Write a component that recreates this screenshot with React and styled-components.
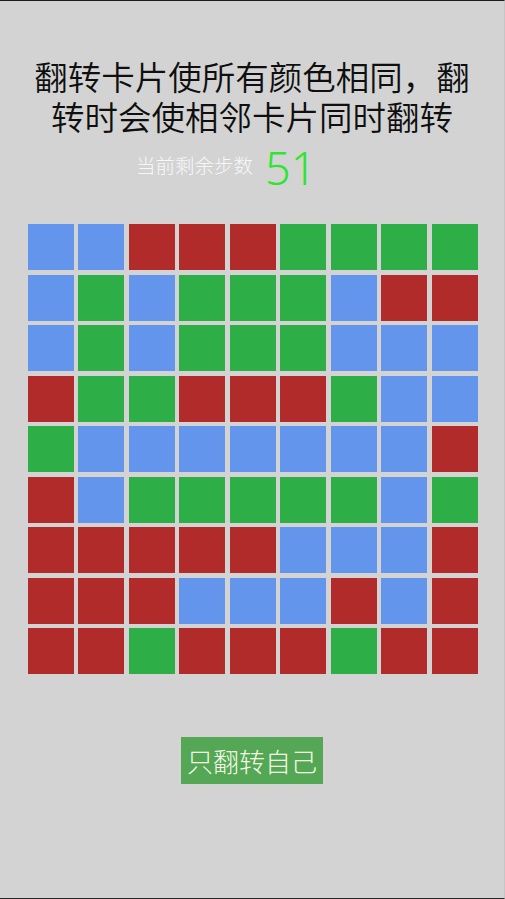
import React from "react";
import styled, { createGlobalStyle } from "styled-components";

const GlobalStyle = createGlobalStyle`
  html, body {
    margin: 0;
    padding: 0;
    background: #d3d3d3;
  }
  * { box-sizing: border-box; }
`;

const Page = styled.div`
  min-height: 100vh;
  background: #d3d3d3;
  border-top: 1px solid #1c1c1c;
  border-bottom: 1px solid #262626;
  border-right: 1px solid #c6c6c6;
  display: flex;
  flex-direction: column;
  align-items: center;
  font-family: "Noto Sans CJK SC", "Noto Sans", sans-serif;
`;

const Title = styled.h1`
  margin: 55px 0 0;
  width: 450px;
  font-size: 33.5px;
  line-height: 40px;
  font-weight: 350;
  color: #0f0f0f;
  text-align: center;
`;

const CounterRow = styled.div`
  margin-top: 5px;
  height: 50px;
  width: 100%;
  display: flex;
  align-items: center;
  padding-left: 136px;
  gap: 12px;
`;

const CounterLabel = styled.span`
  font-size: 19.5px;
  line-height: 1;
  font-weight: 300;
  color: #f7f7f7;
  margin-bottom: 3px;
`;

const CounterValue = styled.span`
  font-family: "Noto Sans", Roboto, sans-serif;
  font-size: 45px;
  line-height: 1;
  font-weight: 300;
  color: #2ee62e;
  margin-top: 3px;
`;

const Board = styled.div`
  margin-top: 33px;
  margin-left: 1px;
  display: grid;
  grid-template-columns: repeat(9, 46px);
  grid-auto-rows: 46px;
  gap: 4.5px;
`;

const COLORS = {
  B: "#6495ed",
  R: "#b22b2b",
  G: "#2dae47",
};

const Cell = styled.div`
  background: ${(p) => COLORS[p.$c]};
`;

const FlipButton = styled.button`
  margin-top: 63px;
  height: 47px;
  padding: 0 5.5px;
  border: none;
  background: #54a754;
  color: #f4fbe8;
  font-family: "Noto Sans CJK SC", "Noto Sans", sans-serif;
  font-size: 26px;
  font-weight: 300;
  line-height: 47px;
  cursor: pointer;
`;

const ROWS = [
  "BBRRRGGGG",
  "BGBGGGBRR",
  "BGBGGGBBB",
  "RGGRRRGBB",
  "GBBBBBBBR",
  "RBGGGGGBG",
  "RRRRRBBBR",
  "RRRBBBRBR",
  "RRGRRRGRR",
];

export default function App() {
  return (
    <>
      <GlobalStyle />
      <Page>
        <Title>翻转卡片使所有颜色相同，翻转时会使相邻卡片同时翻转</Title>
        <CounterRow>
          <CounterLabel>当前剩余步数</CounterLabel>
          <CounterValue>51</CounterValue>
        </CounterRow>
        <Board>
          {ROWS.flatMap((row, r) =>
            row.split("").map((c, i) => <Cell key={`${r}-${i}`} $c={c} />)
          )}
        </Board>
        <FlipButton>只翻转自己</FlipButton>
      </Page>
    </>
  );
}
